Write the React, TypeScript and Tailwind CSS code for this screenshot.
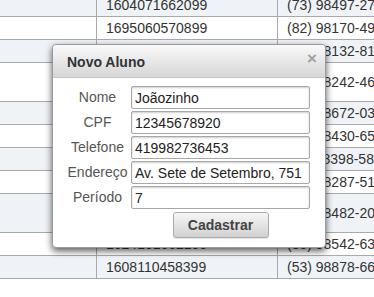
import React from 'react';

type Row = { id: string; phone: string; tall?: boolean };

const rows: Row[] = [
    { id: '1604071662099', phone: '(73) 98497-2731' },
    { id: '1695060570899', phone: '(82) 98170-4912' },
    { id: '1633021184599', phone: '(41) 98132-8140' },
    { id: '1617092237199', phone: '(41) 98242-4655', tall: true },
    { id: '1688120419699', phone: '(31) 98672-0318' },
    { id: '1641030897299', phone: '(21) 98430-6527' },
    { id: '1652111703899', phone: '(11) 98398-5810' },
    { id: '1679050246199', phone: '(47) 98287-5193' },
    { id: '1660080931599', phone: '(62) 98482-2076', tall: true },
    { id: '1624101662199', phone: '(85) 98542-6388' },
    { id: '1608110458399', phone: '(53) 98878-6604' },
];

const fields = [
    { label: 'Nome', value: 'Joãozinho' },
    { label: 'CPF', value: '12345678920' },
    { label: 'Telefone', value: '419982736453' },
    { label: 'Endereço', value: 'Av. Sete de Setembro, 751' },
    { label: 'Período', value: '7' },
];

const App: React.FC = () => {
    return (
        <div
            className="relative w-[374px] h-[297px] overflow-hidden bg-white text-[14px] text-[#333]"
            style={{ fontFamily: '"Liberation Sans", Arial, sans-serif' }}
        >
            {/* background list of alunos */}
            <div className="-mt-[6px] w-[520px]">
                {rows.map((row, i) => (
                    <div
                        key={row.id}
                        className={`grid grid-cols-[96px_181px_1fr] border-b border-[#a9a9a9] ${
                            row.tall ? 'h-[39px]' : 'h-[23px]'
                        } ${i % 2 === 0 ? 'bg-[#eff3f8]' : 'bg-white'}`}
                    >
                        <div />
                        <div className="flex items-center border-l border-[#a9a9a9] pl-[9px]">{row.id}</div>
                        <div className="flex items-center border-l border-[#a9a9a9] pl-[9px] whitespace-nowrap">
                            {row.phone}
                        </div>
                    </div>
                ))}
            </div>

            {/* modal */}
            <div className="absolute left-[52px] top-[44px] w-[274px] rounded-[4px] border border-[#9a9a9a] bg-white shadow-[0_3px_7px_rgba(0,0,0,0.65)]">
                <div className="flex h-[33px] items-center justify-between rounded-t-[4px] border-b border-[#c8c8c8] bg-gradient-to-b from-[#fafafa] to-[#d6d6d6] pl-[14px] pr-[8px] pt-[3px]">
                    <span className="font-bold text-[14px] text-[#333]">Novo Aluno</span>
                    <span className="-mt-[8px] font-bold text-[17px] leading-none text-[#9f9f9f]">×</span>
                </div>

                <div className="pl-[13px] pt-[8px] pb-[9px]">
                    <div className="grid grid-cols-[63px_179px] gap-x-[2px] gap-y-[2px]">
                        {fields.map((f) => (
                            <React.Fragment key={f.label}>
                                <label className="flex h-[23px] items-center justify-center text-[14px] text-[#555]">
                                    {f.label}
                                </label>
                                <input
                                    type="text"
                                    defaultValue={f.value}
                                    className="h-[23px] w-[179px] rounded-[2px] border border-[#a8a8a8] bg-white pl-[3px] text-[14px] text-[#222] shadow-[inset_0_1px_2px_rgba(0,0,0,0.2)] outline-none"
                                />
                            </React.Fragment>
                        ))}
                        <div />
                        <div className="flex justify-center pt-[1px]">
                            <button
                                type="button"
                                className="h-[26px] w-[96px] rounded-[3px] border border-[#ababab] bg-gradient-to-b from-[#f6f6f6] to-[#d2d2d2] text-[14px] font-bold text-[#444] shadow-[0_1px_1px_rgba(0,0,0,0.1)]"
                            >
                                Cadastrar
                            </button>
                        </div>
                    </div>
                </div>
            </div>
        </div>
    );
};

export default App;
